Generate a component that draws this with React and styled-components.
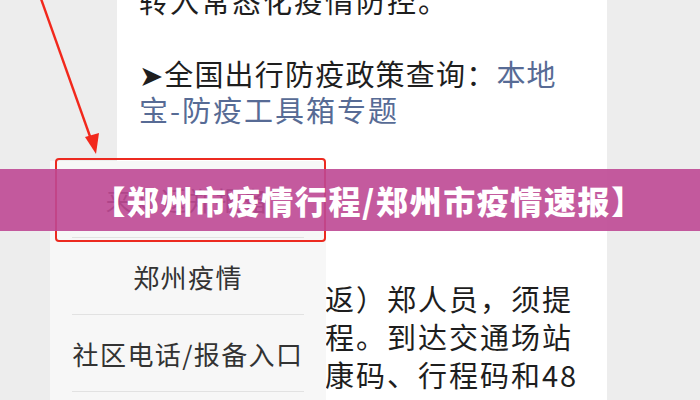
import React from 'react'
import styled, { createGlobalStyle } from 'styled-components'

const GlobalStyle = createGlobalStyle`
  html, body {
    margin: 0;
    padding: 0;
  }
  body {
    width: 700px;
    height: 400px;
    overflow: hidden;
    background: #ededed;
    font-family: "Noto Sans CJK SC", "Noto Sans", sans-serif;
  }
`

const paragraphs = [
    { lines: [{ text: '转入常态化疫情防控。' }] },
    {
        lines: [
            { text: '➤全国出行防疫政策查询：', link: '本地', tight: true },
            { link: '宝-防疫工具箱专题' },
        ],
    },
    {
        gap: 152,
        lines: [
            { text: '所有外省来（返）郑人员，须提' },
            { text: '前主动报备行程。到达交通场站' },
            { text: '须配合查验健康码、行程码和48' },
        ],
    },
]

const menuItems = ['来郑返郑报备', '郑州疫情', '社区电话/报备入口', '防疫政策']

function App()
{
    return (
        <Stage>
            <GlobalStyle />
            <Article>
                {paragraphs.map((p, i) => (
                    <Paragraph key={i} $gap={p.gap}>
                        {p.lines.map((line, j) => (
                            <Line key={j} $tight={line.tight}>
                                {line.text}
                                {line.link && <Link>{line.link}</Link>}
                            </Line>
                        ))}
                    </Paragraph>
                ))}
            </Article>

            <Arrow viewBox='0 0 120 170' width='120' height='170'>
                <line x1='40' y1='-4' x2='92' y2='142' stroke='#f2281c' strokeWidth='2.4' />
                <polygon points='96,154 85,137 99,133' fill='#f2281c' />
            </Arrow>

            <Menu>
                {menuItems.map((item, i) => (
                    <MenuItem key={item} $hidden={i === 0}>
                        {item}
                        {i === 0 && <Highlight />}
                    </MenuItem>
                ))}
            </Menu>

            <Banner>【郑州市疫情行程/郑州市疫情速报】</Banner>
        </Stage>
    )
}

export default App

const Stage = styled.div`
    position: relative;
    width: 700px;
    height: 400px;
    overflow: hidden;
    background: #ededed;
    display: flex;
    padding-left: 117px;
    box-sizing: border-box;
`

const Article = styled.article`
    width: 490px;
    height: calc(100% + 18px);
    margin-top: -18px;
    background: #fff;
    padding-left: 22px;
    box-sizing: border-box;
    font-size: 29px;
    line-height: 36px;
    letter-spacing: 2px;
    color: #1e1e1e;
`

const Paragraph = styled.div`
    margin: ${p => p.$gap ? `${p.$gap}px 0 0` : '0 0 37px'};
    line-height: ${p => p.$gap ? '38px' : '36px'};
`

const Line = styled.div`
    white-space: nowrap;
    letter-spacing: ${p => p.$tight ? '1.2px' : 'inherit'};
`

const Link = styled.span`
    color: #576b95;
`

const Arrow = styled.svg`
    position: absolute;
    left: 0;
    top: 0;
    overflow: visible;
`

const Menu = styled.div`
    position: absolute;
    left: 50px;
    top: 161px;
    width: 276px;
    background: #f7f7f7;
    display: flex;
    flex-direction: column;
`

const MenuItem = styled.div`
    position: relative;
    height: 77px;
    display: flex;
    align-items: center;
    justify-content: center;
    font-size: 26px;
    letter-spacing: 1.4px;
    color: ${p => p.$hidden ? '#2a2a2a' : '#333'};

    &::after {
        content: '';
        position: absolute;
        left: 22px;
        right: 22px;
        bottom: 0;
        border-bottom: 1px solid #e2e2e2;
    }
`

const Highlight = styled.div`
    position: absolute;
    top: -3px;
    bottom: -4px;
    left: 5px;
    right: 0;
    border: 2px solid #ec2a20;
    border-radius: 4px;
`

const Banner = styled.div`
    position: absolute;
    left: 0;
    right: 0;
    top: 169px;
    height: 62px;
    padding-left: 38px;
    box-sizing: border-box;
    display: flex;
    align-items: center;
    justify-content: center;
    background: rgba(190, 72, 148, 0.9);
    color: #fff;
    font-size: 32px;
    font-weight: 900;
    letter-spacing: 1.6px;
    white-space: nowrap;
`
